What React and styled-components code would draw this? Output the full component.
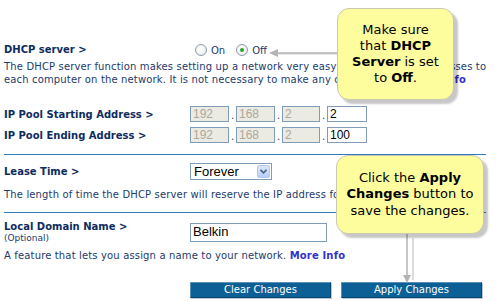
import React from 'react';
import styled, { createGlobalStyle } from 'styled-components';

const Global = createGlobalStyle`
  html, body { margin: 0; padding: 0; background: #ffffff; }
  body { font-family: "DejaVu Sans", Verdana, sans-serif; }
`;

const Page = styled.div`
  position: relative;
  width: 500px;
  height: 301px;
  overflow: hidden;
  box-sizing: border-box;
  padding: 43px 0 0 4px;
  font-size: 10px;
  color: #1d3a6c;
`;

const Row = styled.div`
  display: grid;
  grid-template-columns: 186px 1fr;
  align-items: center;
  height: ${(p) => p.$h || 13}px;
  margin-top: ${(p) => p.$mt || 0}px;
`;

const Label = styled.div`
  font-weight: bold;
  color: #0e2c5e;
  line-height: 13px;
  white-space: nowrap;
`;

const Sub = styled.div`
  font-weight: normal;
  font-size: 9px;
  line-height: 11px;
  color: #1d3a6c;
`;

const Desc = styled.div`
  line-height: 13px;
  white-space: nowrap;
  letter-spacing: 0.15px;
  margin-top: ${(p) => p.$mt || 0}px;
`;

const More = styled.span`
  font-weight: bold;
  color: #3232c8;
`;

const Radios = styled.div`
  display: flex;
  align-items: center;
  padding-left: 5px;
`;

const RadioDot = styled.span`
  display: inline-block;
  box-sizing: border-box;
  width: 12px;
  height: 12px;
  border-radius: 50%;
  border: 1px solid #8a9ab0;
  background: radial-gradient(circle at 40% 40%, #ffffff 0%, #f2f2f0 60%, #dcdcd8 100%);
  position: relative;
  margin-right: 4px;
  &::after {
    content: '';
    display: ${(p) => (p.$on ? 'block' : 'none')};
    position: absolute;
    left: 3px;
    top: 3px;
    width: 4px;
    height: 4px;
    border-radius: 50%;
    background: #2aa52a;
  }
`;

const RadioText = styled.span`
  margin-right: ${(p) => p.$mr || 0}px;
  margin-top: 2px;
`;

const IpGroup = styled.div`
  display: flex;
  align-items: center;
`;

const Box = styled.div`
  box-sizing: border-box;
  width: ${(p) => p.$w || 39}px;
  height: ${(p) => p.$h || 16}px;
  border: 1px solid #7f9db9;
  background: ${(p) => (p.$disabled ? '#ebebe4' : '#ffffff')};
  color: ${(p) => (p.$disabled ? '#aca899' : '#000000')};
  font-family: "Liberation Sans", Arial, sans-serif;
  font-size: ${(p) => p.$fs || 12}px;
  line-height: 14px;
  padding-left: 2px;
  display: flex;
  align-items: center;
`;

const Dot = styled.span`
  width: 7px;
  text-align: center;
  font-size: 10px;
  color: #1d3a6c;
  align-self: flex-end;
  line-height: 12px;
`;

const Divider = styled.div`
  width: 482px;
  height: 1px;
  background: #2f7ab8;
  margin-top: ${(p) => p.$mt || 0}px;
`;

const Select = styled.div`
  box-sizing: border-box;
  width: 82px;
  height: 17px;
  border: 1px solid #7f9db9;
  background: #fff;
  display: flex;
  align-items: center;
  justify-content: space-between;
  font-family: "Liberation Sans", Arial, sans-serif;
  font-size: 13px;
  color: #000;
  padding: 1px 1px 1px 3px;
`;

const SelectBtn = styled.span`
  box-sizing: border-box;
  width: 13px;
  height: 13px;
  border: 1px solid #b7c8f0;
  border-radius: 2px;
  background: linear-gradient(#dce7fd, #b9cdf9);
  display: flex;
  align-items: center;
  justify-content: center;
`;

const Buttons = styled.div`
  display: flex;
  gap: 10px;
  margin-left: 186px;
  margin-top: ${(p) => p.$mt || 0}px;
`;

const Button = styled.div`
  box-sizing: border-box;
  width: 141px;
  height: 16px;
  background: #0d6096;
  border: 1px solid #0a4670;
  border-top-color: #5a8fb8;
  border-left-color: #5a8fb8;
  box-shadow: 1px 1px 0 #b9c9d8;
  color: #ffffff;
  font-size: 10px;
  line-height: 14px;
  text-align: center;
`;

const Callout = styled.div`
  position: absolute;
  left: ${(p) => p.$x}px;
  top: ${(p) => p.$y}px;
  width: ${(p) => p.$w}px;
  height: ${(p) => p.$h}px;
  box-sizing: border-box;
  background: #fdfd9e;
  border: 1px solid #c9c9b0;
  border-radius: 12px;
  box-shadow: 4px 4px 2px rgba(0, 0, 0, 0.22);
  display: flex;
  align-items: center;
  justify-content: center;
  text-align: center;
  font-size: 13px;
  line-height: ${(p) => p.$lh || 16}px;
  color: #000;
`;

const Overlay = styled.svg`
  position: absolute;
  left: 0;
  top: 0;
  pointer-events: none;
`;

function Ip({ last }) {
  return (
    <IpGroup>
      <Box $disabled>192</Box>
      <Dot>.</Dot>
      <Box $disabled>168</Box>
      <Dot>.</Dot>
      <Box $disabled $w={38}>2</Box>
      <Dot>.</Dot>
      <Box $w={40}>{last}</Box>
    </IpGroup>
  );
}

export default function App() {
  return (
    <>
      <Global />
      <Page>
        <Row>
          <Label>DHCP server &gt;</Label>
          <Radios>
            <RadioDot />
            <RadioText $mr={11}>On</RadioText>
            <RadioDot $on />
            <RadioText>Off</RadioText>
          </Radios>
        </Row>
        <Desc $mt={4}>
          The DHCP server function makes setting up a network very easy by assigning IP addresses to
          <br />
          each computer on the network. It is not necessary to make any changes here. <More>More Info</More>
        </Desc>
        <Row $h={16} $mt={20}>
          <Label>IP Pool Starting Address &gt;</Label>
          <Ip last="2" />
        </Row>
        <Row $h={16} $mt={5}>
          <Label>IP Pool Ending Address &gt;</Label>
          <Ip last="100" />
        </Row>
        <Divider $mt={11} />
        <Row $h={17} $mt={8}>
          <Label>Lease Time &gt;</Label>
          <Select>
            Forever
            <SelectBtn>
              <svg width="7" height="5" viewBox="0 0 7 5">
                <path d="M0.5 0.8 L3.5 3.8 L6.5 0.8" fill="none" stroke="#4d6185" strokeWidth="1.6" />
              </svg>
            </SelectBtn>
          </Select>
        </Row>
        <Desc $mt={8}>The length of time the DHCP server will reserve the IP address for each computer.</Desc>
        <Divider $mt={11} />
        <Row $h={19} $mt={7}>
          <Label>
            Local Domain Name &gt;
            <Sub>(Optional)</Sub>
          </Label>
          <Box $w={137} $h={19} $fs={13}>Belkin</Box>
        </Row>
        <Desc $mt={10}>
          A feature that lets you assign a name to your network. <More>More Info</More>
        </Desc>
        <Buttons $mt={20}>
          <Button>Clear Changes</Button>
          <Button>Apply Changes</Button>
        </Buttons>

        <Overlay width="500" height="301" viewBox="0 0 500 301">
          <line x1="275" y1="54" x2="338" y2="54" stroke="#d0d0d0" strokeWidth="1" />
          <line x1="275" y1="53" x2="338" y2="53" stroke="#b4b4b4" strokeWidth="1.5" />
          <path d="M269 53 L278 49 L278 57 Z" fill="#b4b4b4" />
          <line x1="413" y1="238" x2="413" y2="280" stroke="#dcdcdc" strokeWidth="2" />
          <line x1="407" y1="233" x2="407" y2="276" stroke="#b4b4b4" strokeWidth="1.5" />
          <path d="M403 275 L411 275 L407 283 Z" fill="#b4b4b4" />
        </Overlay>

        <Callout $x={337} $y={8} $w={117} $h={92}>
          <div>
            Make sure
            <br />
            that <b>DHCP</b>
            <br />
            <b>Server</b> is set
            <br />
            to <b>Off</b>.
          </div>
        </Callout>
        <Callout $x={336} $y={155} $w={148} $h={79} $lh={16.5}>
          <div>
            Click the <b>Apply</b>
            <br />
            <b>Changes</b> button to
            <br />
            save the changes.
          </div>
        </Callout>
      </Page>
    </>
  );
}
